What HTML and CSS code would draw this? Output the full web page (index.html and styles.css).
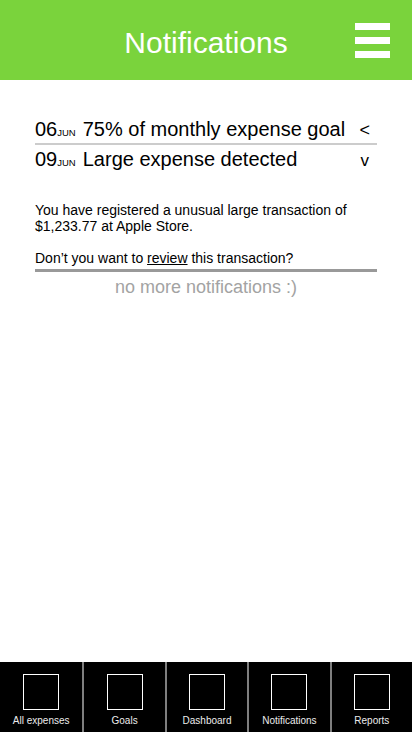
FILE: index.html
```html
<!DOCTYPE html>
<html>
<head>
<meta charset="utf-8">
<link rel="stylesheet" href="styles.css">
</head>
<body>
<div class="app">
  <header class="topbar">
    <div class="spacer"></div>
    <h1 class="title">Notifications</h1>
    <div class="burger"><span></span><span></span><span></span></div>
  </header>
  <main class="content">
    <div class="note-row note-row-first">
      <span class="day">06</span><span class="mon">JUN</span>
      <span class="note-title">75% of monthly expense goal</span>
      <span class="toggle">&lt;</span>
    </div>
    <div class="divider"></div>
    <div class="note-row note-row-open">
      <span class="day">09</span><span class="mon">JUN</span>
      <span class="note-title">Large expense detected</span>
      <span class="toggle toggle-v">v</span>
    </div>
    <div class="note-body">
      <p>You have registered a unusual large transaction of<br>$1,233.77 at Apple Store.</p>
      <p>Don’t you want to <u>review</u> this transaction?</p>
    </div>
    <div class="end-line"></div>
    <p class="empty">no more notifications :)</p>
  </main>
  <nav class="tabbar">
    <div class="tab"><div class="tab-icon"></div><div class="tab-label">All expenses</div></div>
    <div class="tab"><div class="tab-icon"></div><div class="tab-label">Goals</div></div>
    <div class="tab"><div class="tab-icon"></div><div class="tab-label">Dashboard</div></div>
    <div class="tab"><div class="tab-icon"></div><div class="tab-label">Notifications</div></div>
    <div class="tab"><div class="tab-icon"></div><div class="tab-label">Reports</div></div>
  </nav>
</div>
</body>
</html>
```
FILE: styles.css
```css
* { box-sizing: border-box; }
html, body { margin: 0; padding: 0; }
body {
  font-family: "Liberation Sans", Arial, sans-serif;
  background: #fff;
  color: #000;
}
.app {
  width: 412px;
  height: 732px;
  display: flex;
  flex-direction: column;
}
.topbar {
  height: 80px;
  flex: none;
  background: #7ad33c;
  display: grid;
  grid-template-columns: 1fr auto 1fr;
  align-items: center;
}
.title {
  margin: 0;
  font-weight: normal;
  font-size: 30px;
  line-height: 36px;
  color: #fff;
  padding-top: 6px;
}
.burger {
  justify-self: end;
  margin-right: 22px;
  display: flex;
  flex-direction: column;
  gap: 7px;
}
.burger span {
  display: block;
  width: 35px;
  height: 7px;
  background: #fff;
}
.content {
  flex: 1;
  padding: 38px 35px 0 35px;
}
.note-row {
  display: flex;
  align-items: baseline;
  line-height: 23px;
  font-size: 20px;
}
.note-row-first { height: 25px; }
.note-row-open { padding-top: 3px; }
.day { font-size: 20px; }
.mon { font-size: 9.5px; margin-right: 7px; }
.note-title { flex: 1; }
.toggle { font-size: 18px; margin-right: 7px; }
.toggle-v { font-size: 17px; margin-right: 8px; }
.divider {
  height: 2px;
  background: #cccccc;
}
.note-body {
  margin-top: 28px;
  font-size: 14px;
  line-height: 16px;
  padding-bottom: 3px;
}
.note-body p { margin: 0 0 16px 0; }
.note-body p:last-child { margin-bottom: 0; }
.end-line {
  height: 3px;
  background: #999999;
}
.empty {
  margin: 5px 0 0 0;
  text-align: center;
  font-size: 18px;
  line-height: 20px;
  color: #a3a3a3;
}
.tabbar {
  height: 70px;
  flex: none;
  background: #000;
  display: grid;
  grid-template-columns: repeat(5, 1fr);
}
.tab {
  display: flex;
  flex-direction: column;
  align-items: center;
  padding-top: 12px;
}
.tab + .tab { border-left: 2px solid #7f7f7f; }
.tab-icon {
  width: 36px;
  height: 36px;
  border: 1px solid #fff;
}
.tab-label {
  margin-top: 5px;
  font-size: 10px;
  line-height: 12px;
  color: #ececec;
}
```
